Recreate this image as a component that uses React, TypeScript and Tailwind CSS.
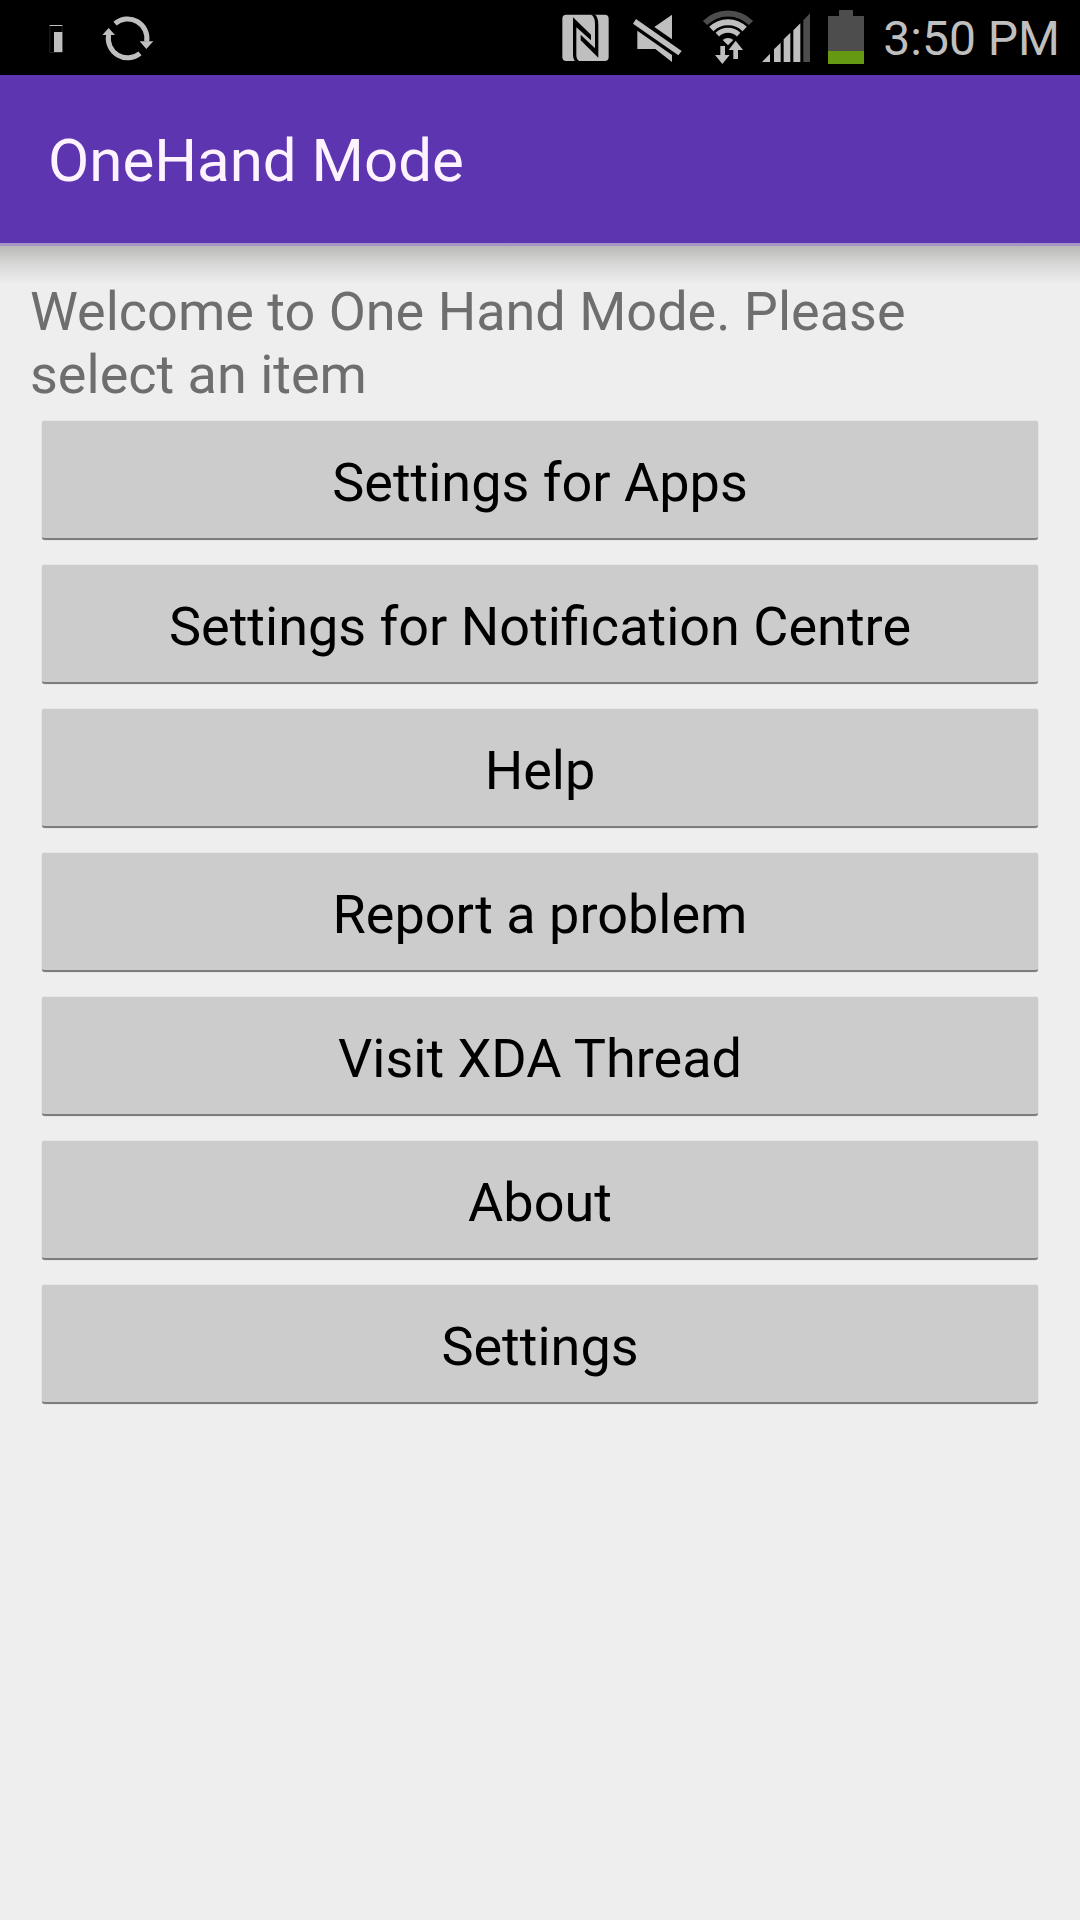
import type { ReactNode } from 'react';

const menuItems = [
  'Settings for Apps',
  'Settings for Notification Centre',
  'Help',
  'Report a problem',
  'Visit XDA Thread',
  'About',
  'Settings',
];

function Icon({
  viewBox,
  className,
  label,
  children,
}: {
  viewBox: string;
  className: string;
  label: string;
  children: ReactNode;
}) {
  return (
    <svg
      viewBox={viewBox}
      role="img"
      aria-label={label}
      fill="currentColor"
      className={`h-[75px] shrink-0 ${className}`}
    >
      {children}
    </svg>
  );
}

function StatusBar() {
  return (
    <div className="flex h-[75px] items-center justify-between bg-black pr-5 pl-[49px] text-[#bfbfbf]">
      <div className="flex items-center gap-[39px]">
        <Icon label="Notification" viewBox="147 0 42 225" className="w-[14px]">
          <rect x="149.5" y="76" width="37" height="81" fill="none" stroke="#333" strokeWidth="2" />
          <path d="M149 75h38v3h-38zM162 96h25v60h-25z" />
        </Icon>
        <Icon label="Syncing" viewBox="306 0 156 225" className="w-[52px]">
          <g fill="none" stroke="currentColor" strokeWidth="15">
            <path d="M345 71A58 58 0 0 1 440 125" />
            <path d="M420 160A58 58 0 0 1 326 104" />
          </g>
          <path d="M419 124h41l-21 23zM307 105h38l-19-21z" />
        </Icon>
      </div>
      <div className="flex items-center">
        <Icon label="NFC" viewBox="64 0 141 225" className="w-[47px]">
          <rect x="65" y="44" width="139" height="139" rx="12" />
          <path
            fill="#000"
            d="M97 52l54 52v17l-44-39v83c0 9 3 16 10 19h-14c-5-6-6-14-6-24zM173 173l-53-52v-17l43 41V72c0-15-4-25-15-29h14c8 6 11 18 11 30z"
          />
        </Icon>
        <Icon label="Sound off" viewBox="278 0 147 225" className="ml-6 w-[49px]">
          <path d="M395 44v74l-53-37zM291 92l104 73v21l-50-39h-54zM287 57l137 96-10 13-136-95z" />
        </Icon>
        <Icon label="Wi-Fi" viewBox="36 0 156 225" className="ml-5 w-[52px]">
          <g fill="none" stroke="currentColor">
            <path stroke="#4d4d4d" strokeWidth="18" d="M45 69A97 97 0 0 1 183 69" />
            <path strokeWidth="18" d="M64 87A71 71 0 0 1 164 87" />
            <path strokeWidth="15" d="M82 104A46 46 0 0 1 146 104" />
          </g>
          <path d="M98 120a24 24 0 0 1 32 0l-16 16z" />
          <path
            stroke="#000"
            strokeWidth="6"
            paintOrder="stroke"
            d="M137 122l22 28h-15v27h-14v-27h-14zM91 138h14v27h14l-22 27-22-27h16z"
          />
        </Icon>
        <Icon label="Signal" viewBox="216 0 144 225" className="ml-2 w-[48px]">
          <path d="M216 186l24-25v25zM252 148l20-20v58h-20zM281 118l20-20v88h-20zM310 91l21-21v116h-21z" />
          <path fill="#4d4d4d" d="M340 61l20-21v146h-20z" />
        </Icon>
        <Icon label="Battery" viewBox="414 0 108 225" className="ml-[18px] w-[36px]">
          <path fill="#4d4d4d" d="M414 48h33V30h42v18h33v144H414z" />
          <path fill="#669912" d="M414 153h108v39H414z" />
        </Icon>
        <time className="ml-[19px] pt-0.5 text-5xl whitespace-nowrap">3:50 PM</time>
      </div>
    </div>
  );
}

export default function App() {
  return (
    <div className="min-h-screen bg-[#eeeeee] font-[Roboto,sans-serif]">
      <StatusBar />
      <header className="flex h-[168px] items-center bg-[#5e35b1] px-12 pt-1">
        <h1 className="text-6xl text-[#fdf3ff]">OneHand Mode</h1>
      </header>
      <div className="h-[3px] bg-[#a794c6]" />
      <main className="bg-linear-to-b from-[#b9b9b6] via-[#d8d8d8] via-[18px] to-[#eeeeee] to-[38px] px-[30px] pt-[34px]">
        <p className="text-[54px] leading-[63px] text-[#6e6e6e]">
          Welcome to One Hand Mode. Please select an item
        </p>
        <nav className="mt-[15px] flex flex-col gap-[25px] px-3">
          {menuItems.map((item) => (
            <button
              key={item}
              type="button"
              className="rounded-[3px] border-b-2 border-[#7d7d7d] bg-[#cccccc] pt-[30px] pb-6 text-[54px] leading-[63px] text-black shadow-[0_0_1px_#9a9a9a]"
            >
              {item}
            </button>
          ))}
        </nav>
      </main>
    </div>
  );
}
